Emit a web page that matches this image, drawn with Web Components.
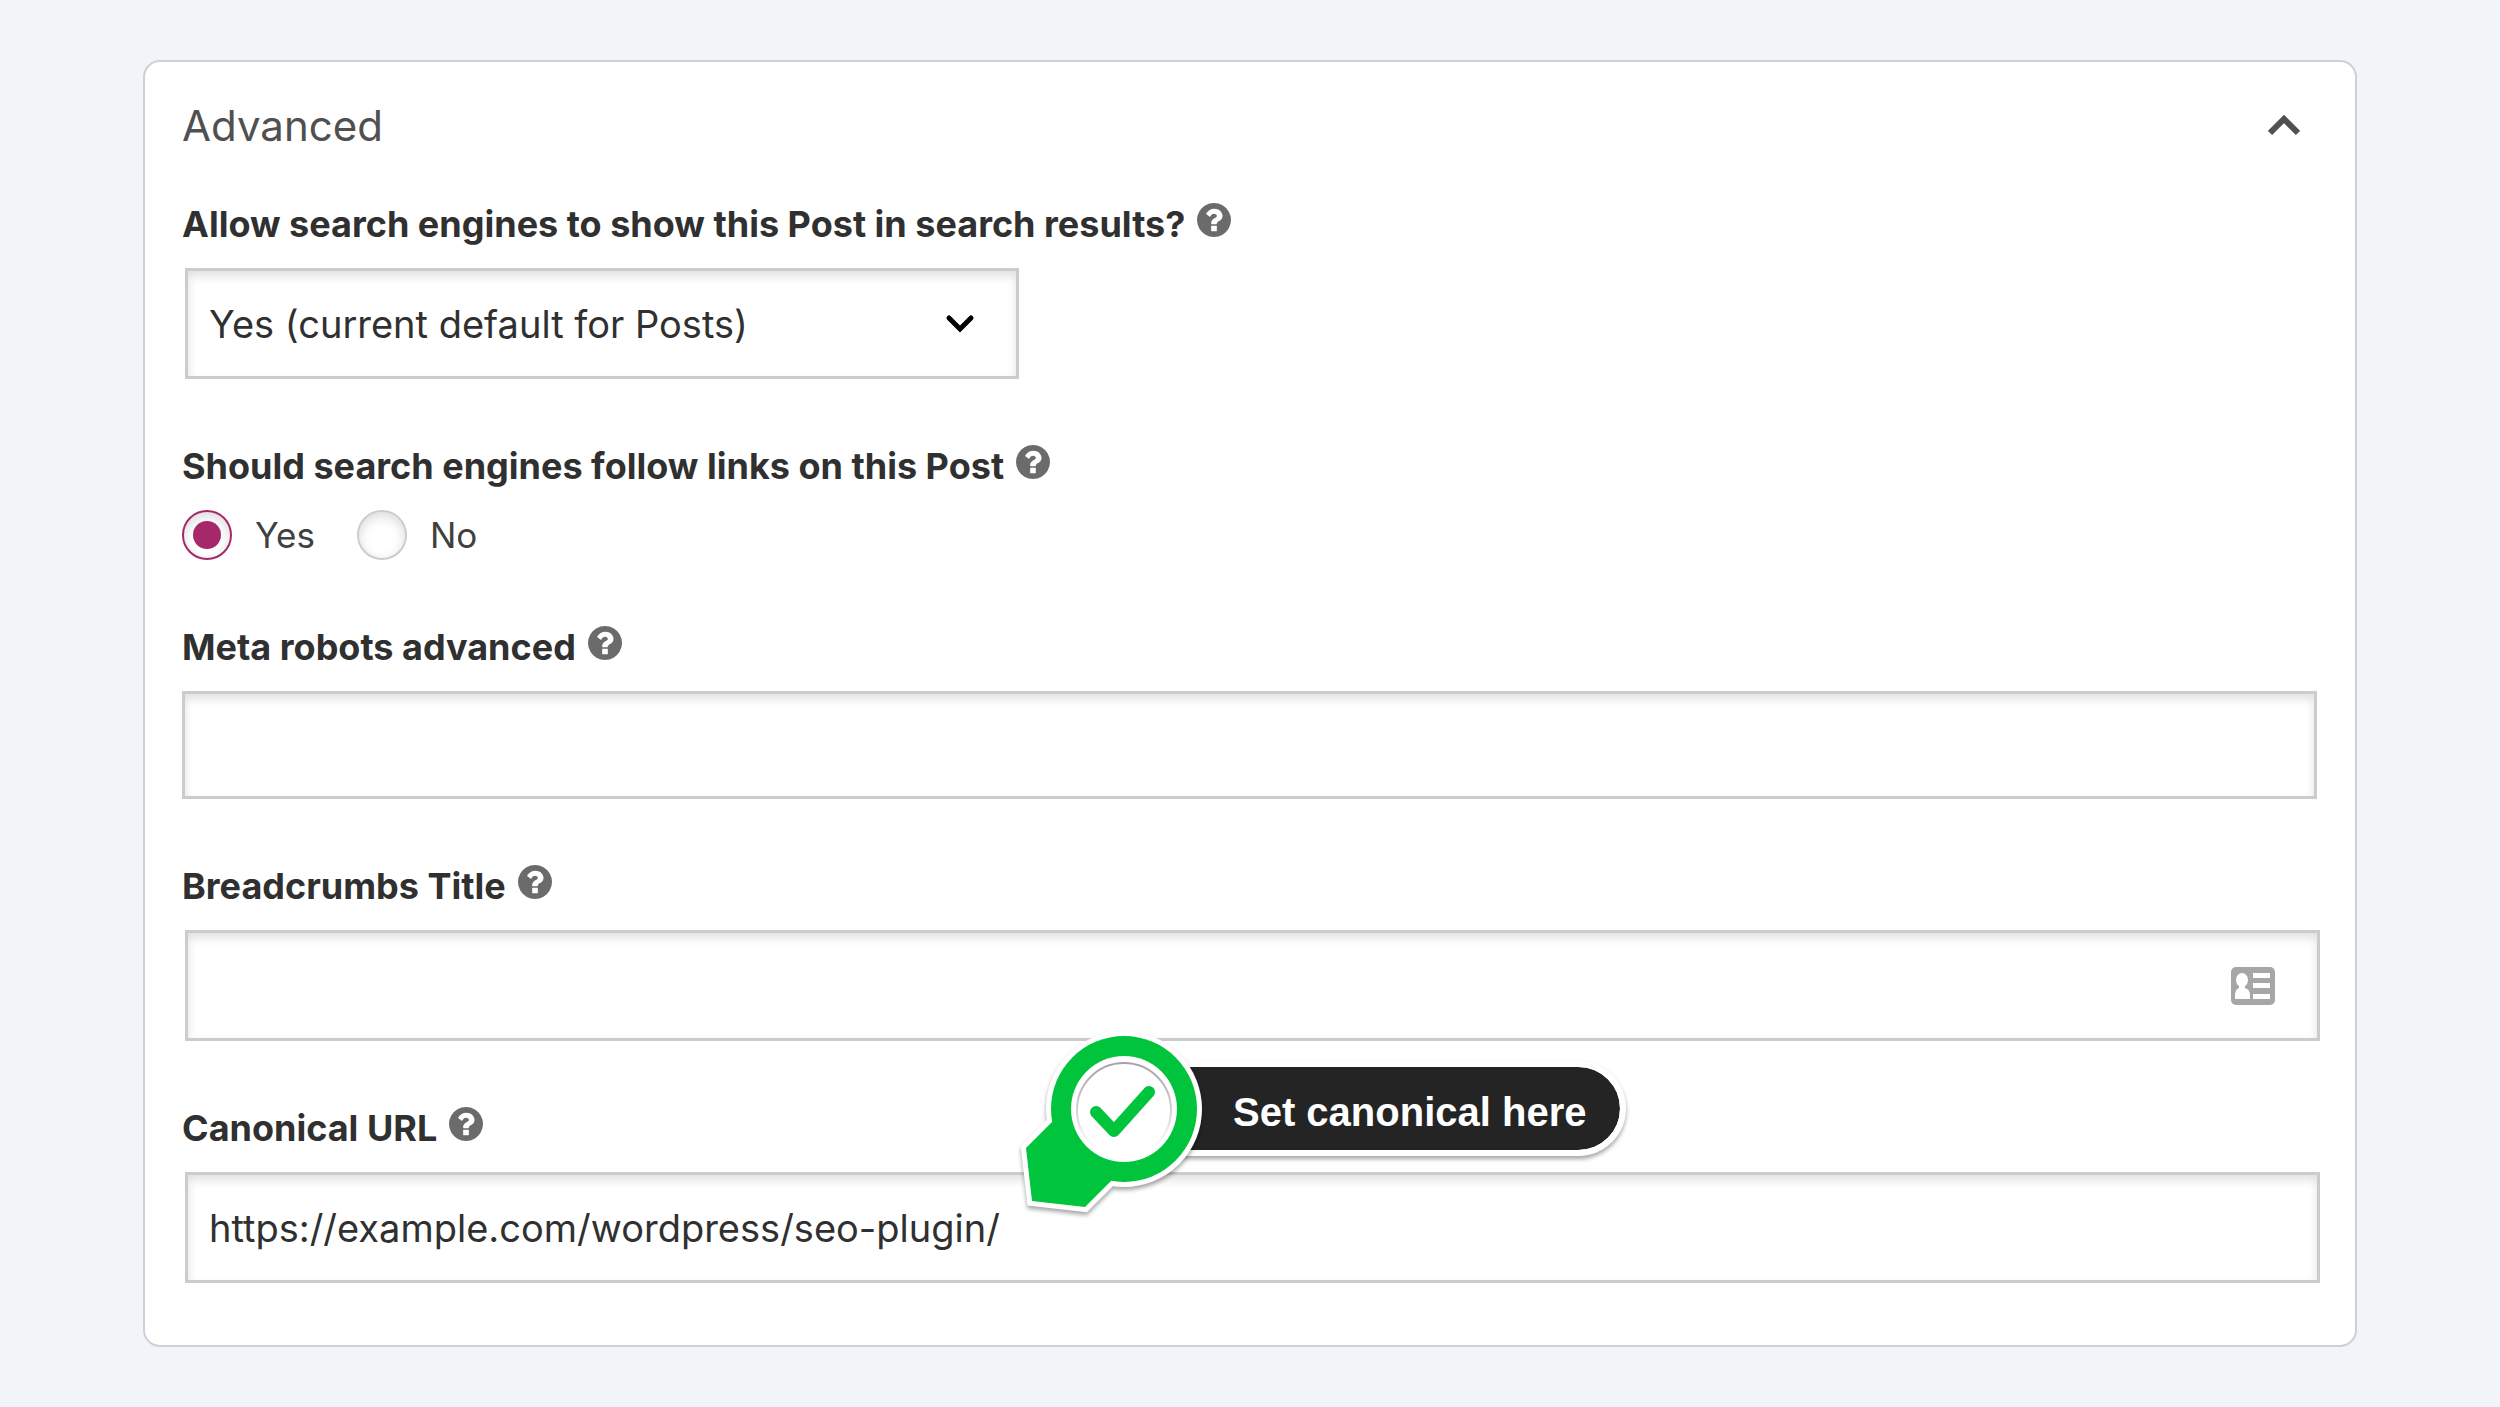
<!DOCTYPE html>
<html lang="en">
<head>
<meta charset="utf-8">
<title>Advanced</title>
<style>
  body {
    --page-color: #f1f5fa;
    --card-border: #cdd1d7;
    --field-border: #cccccc;
    --field-shadow: inset 0 5px 10px rgba(0, 0, 0, 0.12);
    --primary-color: #a4286a;
    --text-color: #303030;
    --heading-color: #505050;
    --marker-color: #00c53c;
    margin: 0;
    padding: 60px 143px;
    background: var(--page-color);
    color: var(--text-color);
    font-family: Inter, "Liberation Sans", sans-serif;
    font-size: 36px;
    line-height: 48px;
  }
</style>
</head>
<body>
<settings-panel heading="Advanced">
  <select-field label="Allow search engines to show this Post in search results?" value="Yes (current default for Posts)"></select-field>
  <radio-field label="Should search engines follow links on this Post" options="Yes,No"></radio-field>
  <text-field class="flush" label="Meta robots advanced"></text-field>
  <text-field label="Breadcrumbs Title" contact></text-field>
  <text-field label="Canonical URL" value="https://example.com/wordpress/seo-plugin/">
    <hint-callout>Set canonical here</hint-callout>
  </text-field>
</settings-panel>

<script>
const FIELD_GAP = 63; // pixel unit
const LABEL_GAP = 20; // pixel unit

const fieldStyle = `
  :host {
    display: block;
    position: relative;
  }

  .head {
    display: flex;
    gap: 12px;
    align-items: flex-start;
    margin-bottom: ${LABEL_GAP}px;
  }

  .title {
    font-weight: 650;
    white-space: nowrap;
  }

  .control {
    position: relative;
    margin-left: 3px;
  }

  input[type="text"], select {
    display: block;
    box-sizing: border-box;
    width: 100%;
    height: 111px;
    margin: 0;
    padding: 0 21px;
    border: 3px solid var(--field-border);
    border-radius: 0;
    outline: none;
    appearance: none;
    background: #fff;
    box-shadow: var(--field-shadow);
    color: inherit;
    font: inherit;
    font-size: 38px;
  }
`;

class SettingsPanel extends HTMLElement {
  constructor() {
    super();
    this.attachShadow({ mode: "open" });
    this.shadowRoot.innerHTML = `
      <style>
        :host {
          display: block;
          padding: 36px 35px 62px 37px;
          background: #fff;
          border: 2px solid var(--card-border);
          border-radius: 17px;
        }

        header {
          display: flex;
          justify-content: space-between;
          align-items: center;
          margin-bottom: 46px;
          color: var(--heading-color);
        }

        h2 {
          margin: 0;
          font-size: 42px;
          line-height: 56px;
          font-weight: 400;
        }

        button {
          display: flex;
          padding: 0 20px;
          border: 0;
          background: none;
          color: inherit;
        }

        .fields {
          display: flex;
          flex-direction: column;
          gap: ${FIELD_GAP}px;
        }
      </style>
      <header>
        <h2>${this.getAttribute("heading")}</h2>
        <button type="button" aria-label="Collapse section" aria-expanded="true">
          <svg width="32" height="22" viewBox="0 0 32 22" fill="none" stroke="currentColor" stroke-width="6">
            <path d="M2 18 16 4 30 18"/>
          </svg>
        </button>
      </header>
      <div class="fields"><slot></slot></div>
    `;
  }
}

class HelpButton extends HTMLElement {
  constructor() {
    super();
    this.attachShadow({ mode: "open" });
    this.shadowRoot.innerHTML = `
      <style>
        :host {
          display: block;
          padding-top: 3px;
        }

        button {
          display: block;
          padding: 0;
          border: 0;
          background: none;
          color: #6b6b6b;
        }

        svg {
          display: block;
        }
      </style>
      <button type="button" aria-label="Help">
        <svg width="34" height="34" viewBox="128 128 1536 1536" fill="currentColor">
          <path d="M1024 1376v-192q0-14-9-23t-23-9h-192q-14 0-23 9t-9 23v192q0 14 9 23t23 9h192q14 0 23-9t9-23zm256-672q0-88-55.5-163t-138.5-116-170-41q-243 0-371 213-15 24 8 42l132 100q7 6 19 6 16 0 25-12 53-68 86-92 34-24 86-24 48 0 85.5 26t37.5 59q0 38-20 61t-68 45q-63 28-115.5 86.5t-52.5 125.5v36q0 14 9 23t23 9h192q14 0 23-9t9-23q0-19 21.5-49.5t54.5-49.5q32-18 49-28.5t46-35 44.5-48 28-60.5 12.5-81zm384 192q0 209-103 385.5t-279.5 279.5-385.5 103-385.5-103-279.5-279.5-103-385.5 103-385.5 279.5-279.5 385.5-103 385.5 103 279.5 279.5 103 385.5z"/>
        </svg>
      </button>
    `;
  }
}

class SelectField extends HTMLElement {
  constructor() {
    super();
    this.attachShadow({ mode: "open" });
    this.shadowRoot.innerHTML = `
      <style>
        ${fieldStyle}

        .control {
          width: 39%;
        }

        .control svg {
          position: absolute;
          right: 44px;
          top: 45px;
          pointer-events: none;
        }
      </style>
      <div class="head">
        <label class="title" for="field">${this.getAttribute("label")}</label>
        <help-button></help-button>
      </div>
      <div class="control">
        <select id="field"><option>${this.getAttribute("value")}</option></select>
        <svg width="30" height="22" viewBox="0 0 30 22" fill="none" stroke="#000" stroke-width="5" stroke-linecap="round">
          <path d="M4 5 15 16 26 5"/>
        </svg>
      </div>
    `;
  }
}

class RadioField extends HTMLElement {
  constructor() {
    super();
    this.attachShadow({ mode: "open" });
    const options = this.getAttribute("options").split(",");
    this.shadowRoot.innerHTML = `
      <style>
        ${fieldStyle}

        .options {
          display: flex;
          gap: 42px;
          color: #404040;
          font-size: 35px;
        }

        .option {
          display: flex;
          align-items: center;
          gap: 23px;
        }

        input {
          display: flex;
          box-sizing: border-box;
          width: 50px;
          height: 50px;
          margin: 0;
          appearance: none;
          background: #fff;
          border: 2px solid var(--field-border);
          border-radius: 50%;
          box-shadow: inset 0 4px 12px rgba(0, 0, 0, 0.14);
        }

        input:checked {
          border-color: var(--primary-color);
        }

        input:checked::before {
          content: "";
          width: 28px;
          height: 28px;
          margin: auto;
          border-radius: 50%;
          background: var(--primary-color);
        }
      </style>
      <div class="head">
        <span class="title" id="title">${this.getAttribute("label")}</span>
        <help-button></help-button>
      </div>
      <div class="options" role="radiogroup" aria-labelledby="title">
        ${options.map((option, i) => `
          <div class="option">
            <input type="radio" name="follow" id="option-${i}" ${i === 0 ? "checked" : ""}>
            <label for="option-${i}">${option}</label>
          </div>
        `).join("")}
      </div>
    `;
  }
}

const contactIcon = `
  <svg width="44" height="38" viewBox="0 0 44 38">
    <rect width="44" height="38" rx="5" fill="#a6a6a6"/>
    <g fill="#fff">
      <ellipse cx="11" cy="13" rx="6" ry="7"/>
      <path d="M8 18h6v3q5 1 5 8v3H4v-3q0-7 4-8z"/>
      <path d="M22 6h17v5H22zM22 16h17v5H22zM22 27h17v5H22z"/>
    </g>
  </svg>
`;

class TextField extends HTMLElement {
  constructor() {
    super();
    this.attachShadow({ mode: "open" });
    this.shadowRoot.innerHTML = `
      <style>
        ${fieldStyle}

        .control svg {
          position: absolute;
          right: 45px;
          top: 37px;
        }

        :host(.flush) .control {
          margin: 0 3px 0 0;
        }

        :host(.flush) input {
          height: 108px;
        }
      </style>
      <div class="head">
        <label class="title" for="field">${this.getAttribute("label")}</label>
        <help-button></help-button>
      </div>
      <div class="control">
        <input type="text" id="field" value="${this.getAttribute("value") || ""}">
        ${this.hasAttribute("contact") ? contactIcon : ""}
      </div>
      <slot></slot>
    `;
  }
}

class HintCallout extends HTMLElement {
  constructor() {
    super();
    this.attachShadow({ mode: "open" });
    this.shadowRoot.innerHTML = `
      <style>
        :host {
          position: absolute;
          left: 834px;
          top: -78px;
          display: flex;
          align-items: flex-start;
        }

        svg {
          position: relative;
          z-index: 1;
          overflow: visible;
          filter: drop-shadow(0 3px 2px rgba(0, 0, 0, 0.35));
        }

        .pill {
          box-sizing: border-box;
          height: 95px;
          margin: 35px 0 0 -40px;
          padding: 21px 34px 0 61px;
          border: 6px solid #fff;
          border-radius: 0 48px 48px 0;
          background: #242424;
          background-clip: padding-box;
          box-shadow: 0 3px 4px rgba(0, 0, 0, 0.35);
          color: #fff;
          font-family: "Liberation Sans", Arial, sans-serif;
          font-size: 40px;
          font-weight: 700;
          white-space: nowrap;
        }
      </style>
      <svg width="190" height="190" viewBox="0 0 190 190">
        <defs>
          <linearGradient id="rim" x2="0" y2="1">
            <stop offset="0" stop-color="#a79fa7"/>
            <stop offset="0.5" stop-color="#d6d0d6"/>
            <stop offset="0.9" stop-color="#fff"/>
          </linearGradient>
        </defs>
        <g fill="#fff" stroke="#fff" stroke-width="10">
          <circle cx="108" cy="83" r="73"/>
          <path d="M36 96 10 122l6 53 53 6 27-27z"/>
        </g>
        <g fill="var(--marker-color)">
          <circle cx="108" cy="83" r="73"/>
          <path d="M36 96 10 122l6 53 53 6 27-27z"/>
        </g>
        <circle cx="108" cy="83" r="53" fill="#fff"/>
        <circle cx="108" cy="84" r="47" fill="none" stroke="url(#rim)" stroke-width="2"/>
        <path d="M80 86 98 105 133 66" fill="none" stroke="var(--marker-color)" stroke-width="12" stroke-linecap="round" stroke-linejoin="round"/>
      </svg>
      <div class="pill"><slot></slot></div>
    `;
  }
}

customElements.define("help-button", HelpButton);
customElements.define("settings-panel", SettingsPanel);
customElements.define("select-field", SelectField);
customElements.define("radio-field", RadioField);
customElements.define("text-field", TextField);
customElements.define("hint-callout", HintCallout);
</script>
</body>
</html>
